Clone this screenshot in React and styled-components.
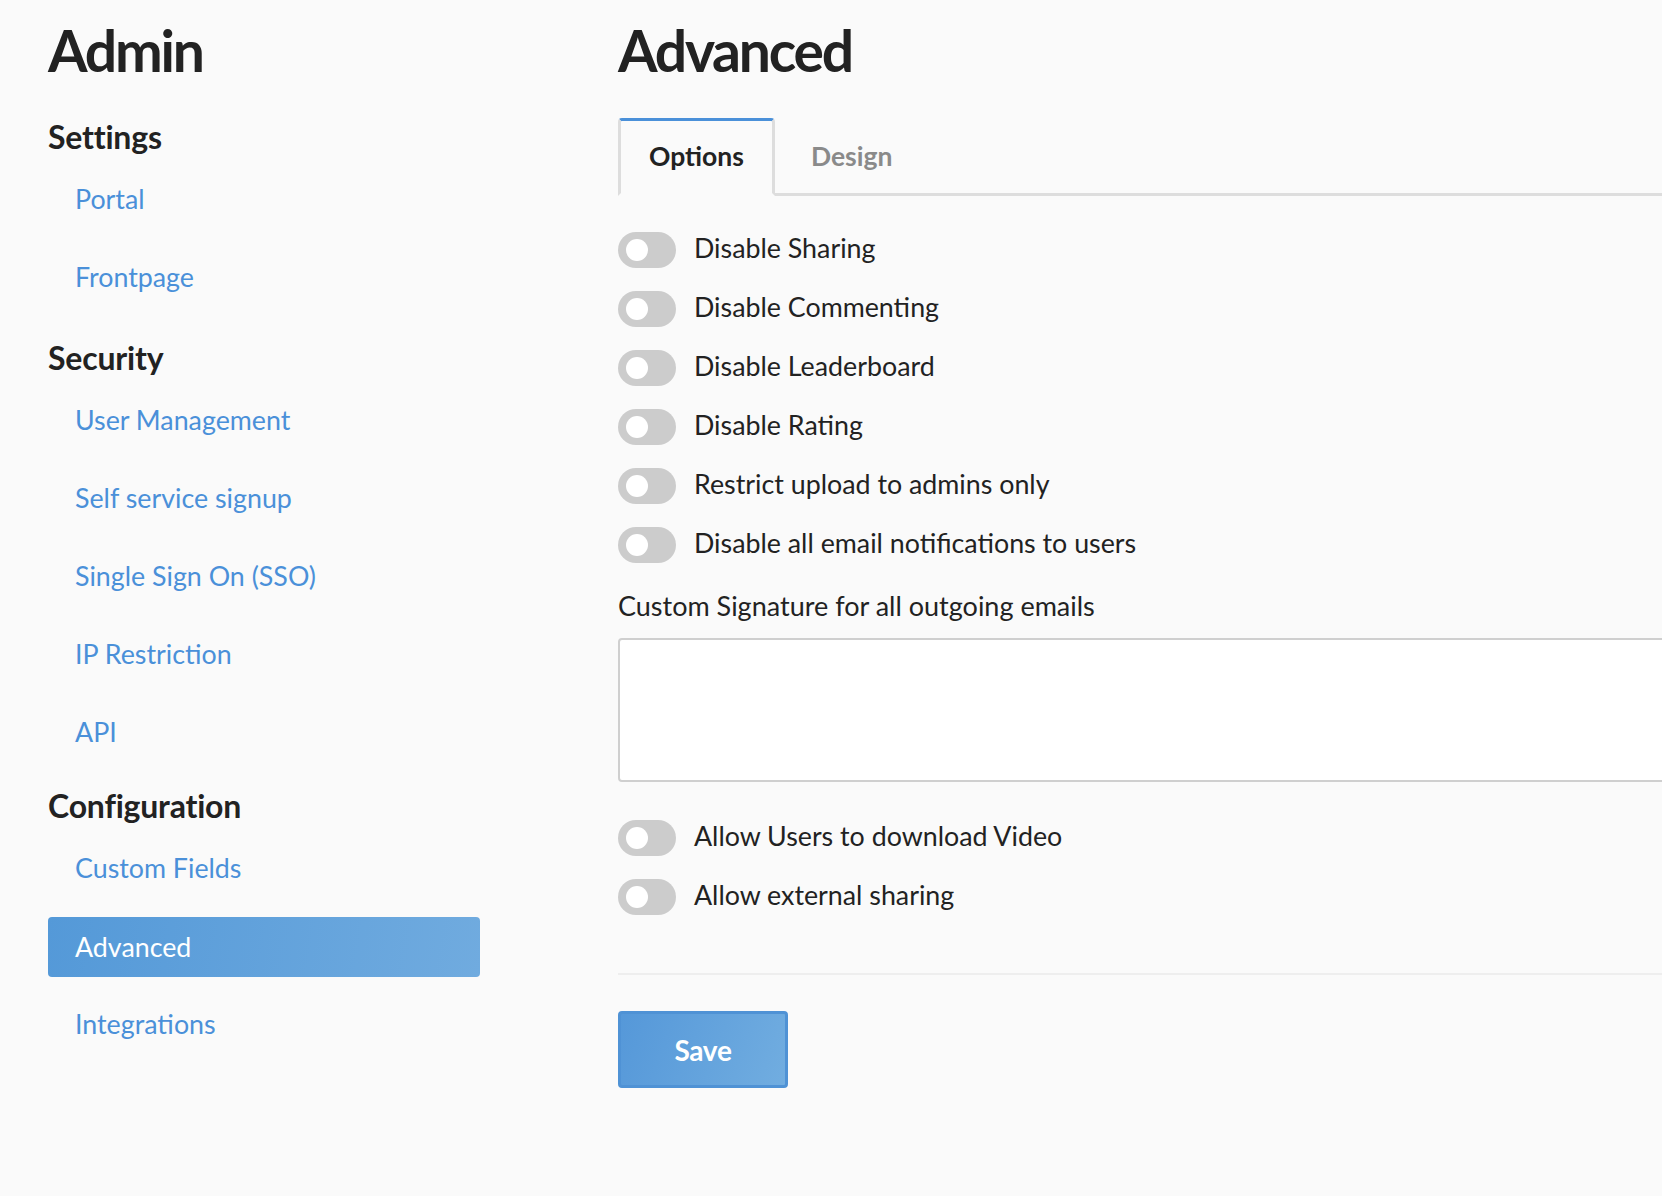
import React from "react";
import styled, { createGlobalStyle } from "styled-components";

const GlobalStyle = createGlobalStyle`
  html, body {
    margin: 0;
    padding: 0;
    background: #fafafa;
    font-family: Lato, "Noto Sans", "Liberation Sans", sans-serif;
    color: #222;
    overflow: hidden;
  }
  * { box-sizing: border-box; }
`;

const Page = styled.div`
  display: flex;
  align-items: flex-start;
  gap: 138px;
  padding: 15px 0 0 48px;
  width: 1662px;
  height: 1196px;
  overflow: hidden;
`;

const Sidebar = styled.nav`
  width: 432px;
  flex-shrink: 0;
  display: flex;
  flex-direction: column;
`;

const PageTitle = styled.h1`
  margin: 0;
  font-size: 57px;
  line-height: 70px;
  font-weight: 700;
  color: #222;
  letter-spacing: -2.2px;
`;

const Section = styled.section`
  margin-top: ${(p) => p.$gap}px;
  display: flex;
  flex-direction: column;
`;

const SectionTitle = styled.h2`
  margin: 0;
  font-size: 32px;
  line-height: 36px;
  font-weight: 700;
  color: #222;
  letter-spacing: -0.2px;
`;

const NavList = styled.ul`
  list-style: none;
  margin: 13px 0 0;
  padding: 0;
  display: flex;
  flex-direction: column;
  gap: 18px;
`;

const NavItem = styled.li`
  height: 60px;
  display: flex;
  align-items: center;
  padding: ${(p) => (p.$active ? "0" : "1px")} 0 0 27px;
  border-radius: 4px;
  font-size: 26.8px;
  color: ${(p) => (p.$active ? "#fff" : "#4a90d9")};
  background: ${(p) =>
    p.$active ? "linear-gradient(100deg, #5499d8 0%, #70abdf 100%)" : "transparent"};
  transform: ${(p) => (p.$active ? "translateY(2px)" : "none")};
  cursor: pointer;
`;

const Main = styled.main`
  width: 1100px;
  flex-shrink: 0;
  display: flex;
  flex-direction: column;
`;

const TabBar = styled.div`
  margin-top: 33px;
  display: flex;
  gap: 5px;
  border-bottom: 3px solid #dddddd;
`;

const Tab = styled.div`
  margin-bottom: ${(p) => (p.$active ? "-3px" : "0")};
  padding: ${(p) => (p.$active ? "17px 28px 19px" : "17px 28px 16px")};
  font-size: 26.5px;
  line-height: 36px;
  font-weight: 700;
  border: 3px solid ${(p) => (p.$active ? "#dddddd" : "transparent")};
  border-top-color: ${(p) => (p.$active ? "#4a90d9" : "transparent")};
  border-bottom: ${(p) => (p.$active ? "3px solid #fafafa" : "none")};
  border-radius: 4px 4px 0 0;
  color: ${(p) => (p.$active ? "#222" : "#8a8a8a")};
  background: ${(p) => (p.$active ? "#fafafa" : "transparent")};
  cursor: pointer;
`;

const OptionList = styled.div`
  margin-top: ${(p) => p.$top}px;
  display: flex;
  flex-direction: column;
  gap: 23px;
`;

const OptionRow = styled.label`
  display: flex;
  align-items: center;
  gap: 18px;
  height: 36px;
  font-size: 26.8px;
  color: #222;
  cursor: pointer;
`;

const OptionText = styled.span`
  line-height: 36px;
  margin-top: -4px;
`;

const Track = styled.span`
  position: relative;
  width: 58px;
  height: 36px;
  border-radius: 18px;
  background: #cccccc;
  flex-shrink: 0;
`;

const Knob = styled.span`
  position: absolute;
  left: 8px;
  top: 7px;
  width: 22px;
  height: 22px;
  border-radius: 50%;
  background: #ffffff;
`;

const FieldLabel = styled.div`
  margin-top: 25px;
  font-size: 27px;
  line-height: 36px;
  color: #222;
`;

const TextArea = styled.textarea`
  margin-top: 14px;
  width: 100%;
  height: 144px;
  border: 2px solid #cfcfcf;
  border-radius: 4px;
  background: #ffffff;
  resize: none;
  font-family: inherit;
  font-size: 26px;
  outline: none;
`;

const Divider = styled.hr`
  margin: 58px 0 0;
  border: none;
  border-top: 2px solid #eeeeee;
  width: 100%;
`;

const SaveButton = styled.button`
  margin-top: 36px;
  width: 170px;
  height: 77px;
  border: 3px solid #4f92d5;
  border-radius: 4px;
  background: linear-gradient(110deg, #5598d9 0%, #71ade0 100%);
  color: #ffffff;
  font-family: inherit;
  font-size: 28px;
  font-weight: 700;
  letter-spacing: -0.3px;
  cursor: pointer;
`;

const Toggle = ({ label }) => (
  <OptionRow>
    <Track>
      <Knob />
    </Track>
    <OptionText>{label}</OptionText>
  </OptionRow>
);

const sections = [
  { title: "Settings", gap: 34, items: ["Portal", "Frontpage"] },
  {
    title: "Security",
    gap: 34,
    items: ["User Management", "Self service signup", "Single Sign On (SSO)", "IP Restriction", "API"],
  },
  { title: "Configuration", gap: 27, items: ["Custom Fields", "Advanced", "Integrations"] },
];

const firstOptions = [
  "Disable Sharing",
  "Disable Commenting",
  "Disable Leaderboard",
  "Disable Rating",
  "Restrict upload to admins only",
  "Disable all email notifications to users",
];

const secondOptions = ["Allow Users to download Video", "Allow external sharing"];

export default function App() {
  return (
    <>
      <GlobalStyle />
      <Page>
        <Sidebar>
          <PageTitle>Admin</PageTitle>
          {sections.map((s) => (
            <Section key={s.title} $gap={s.gap}>
              <SectionTitle>{s.title}</SectionTitle>
              <NavList>
                {s.items.map((item) => (
                  <NavItem key={item} $active={item === "Advanced"}>
                    {item}
                  </NavItem>
                ))}
              </NavList>
            </Section>
          ))}
        </Sidebar>
        <Main>
          <PageTitle>Advanced</PageTitle>
          <TabBar>
            <Tab $active>Options</Tab>
            <Tab>Design</Tab>
          </TabBar>
          <OptionList $top={36}>
            {firstOptions.map((o) => (
              <Toggle key={o} label={o} />
            ))}
          </OptionList>
          <FieldLabel>Custom Signature for all outgoing emails</FieldLabel>
          <TextArea />
          <OptionList $top={38}>
            {secondOptions.map((o) => (
              <Toggle key={o} label={o} />
            ))}
          </OptionList>
          <Divider />
          <div>
            <SaveButton>Save</SaveButton>
          </div>
        </Main>
      </Page>
    </>
  );
}
